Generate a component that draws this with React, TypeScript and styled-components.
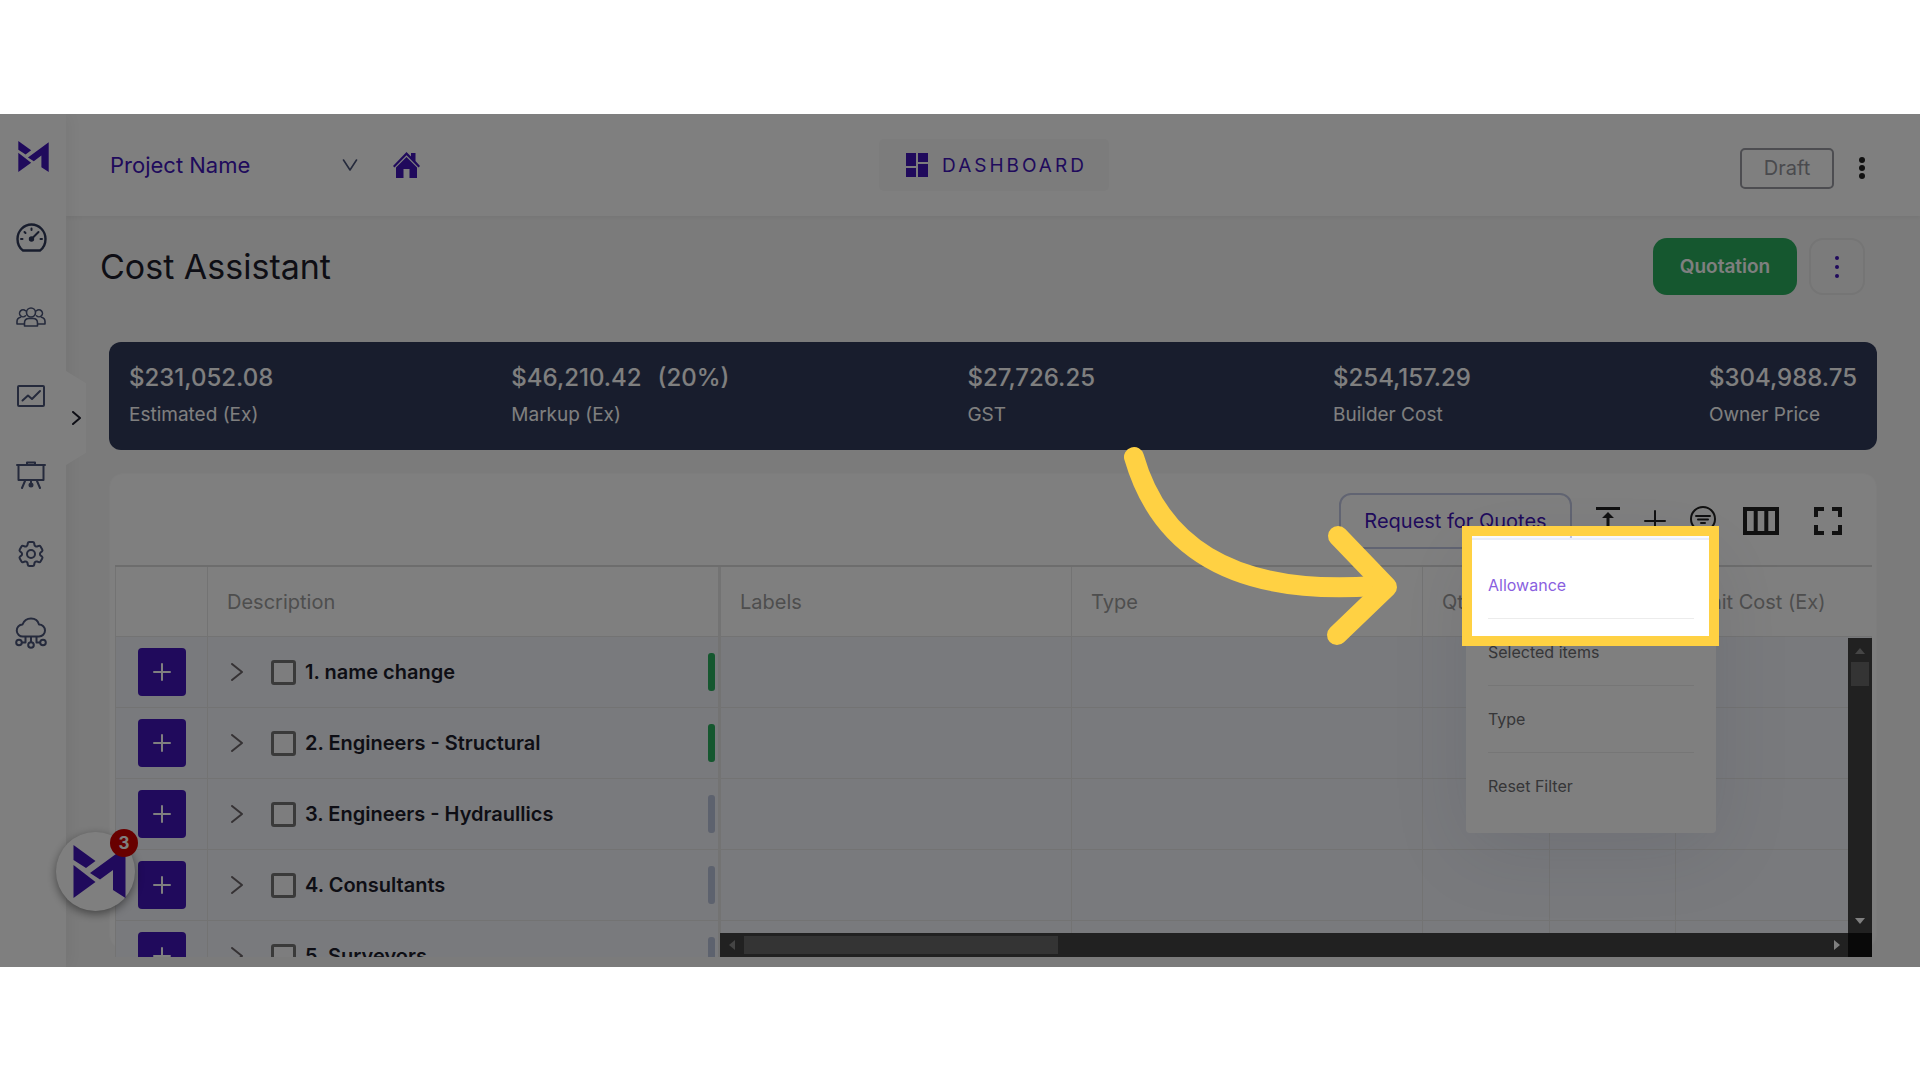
import React from "react";
import styled, { createGlobalStyle } from "styled-components";
import { HiOutlineCog6Tooth } from "react-icons/hi2";

const purple = "#4014b8";
const navy = "#303a5a";
const slate = "#4a5478";
const line = "#e6e6e6";
const yellow = "#ffd143";

const GlobalStyle = createGlobalStyle`
  *, *::before, *::after { box-sizing: border-box; }
  body {
    margin: 0;
    background: #fff;
    color: #1c1d2b;
    font-family: Inter, "Open Sans", sans-serif;
    font-size: 18px;
  }
  button, select, input { font: inherit; color: inherit; margin: 0; }
  button { border: 0; padding: 0; background: none; cursor: pointer; }
  svg { display: block; }
`;

const Page = styled.div`
  min-height: 100vh;
  padding: 114px 0 113px;
`;

const Frame = styled.div`
  position: relative;
  display: flex;
  height: calc(100vh - 227px);
  overflow: hidden;
  background: #f7f7f7;
`;

const Sidebar = styled.nav`
  position: relative;
  z-index: 2;
  flex: 0 0 66px;
  display: flex;
  flex-direction: column;
  align-items: flex-start;
  padding-top: 27px;
  background: #fff;
  box-shadow: 4px 0 16px rgba(0, 0, 0, 0.06);
`;

const Brand = styled.a`
  padding-left: 18px;
  margin-bottom: 26px;
`;

const NavLink = styled.a<{ $active?: boolean }>`
  display: flex;
  align-items: center;
  justify-content: center;
  width: 62px;
  height: 79px;
  color: ${(p) => (p.$active ? navy : slate)};
`;

const ExpandTab = styled.button`
  position: absolute;
  left: 100%;
  top: 257px;
  width: 20px;
  height: 94px;
  display: flex;
  align-items: center;
  justify-content: center;
  background: #fff;
  clip-path: polygon(0 0, 100% 13%, 100% 87%, 0 100%);
`;

const Main = styled.main`
  flex: 1;
  min-width: 0;
  display: flex;
  flex-direction: column;
`;

const Header = styled.header`
  flex: 0 0 102px;
  display: grid;
  grid-template-columns: 1fr auto 1fr;
  align-items: center;
  padding: 0 55px 0 44px;
  background: #fff;
  box-shadow: 0 2px 4px rgba(0, 0, 0, 0.05);
`;

const HeaderLeft = styled.div`
  display: flex;
  align-items: center;
  gap: 35px;
`;

const HeaderRight = styled.div`
  display: flex;
  align-items: center;
  justify-content: flex-end;
  gap: 25px;
  padding-top: 6px;
`;

const ProjectPicker = styled.label`
  display: grid;
  grid-template-columns: 232px 16px;
  align-items: center;
  color: ${slate};
`;

const ProjectSelect = styled.select`
  grid-area: 1 / 1 / 2 / 3;
  appearance: none;
  border: 0;
  padding: 0;
  background: none;
  color: ${purple};
  font-size: 22px;
  line-height: 32px;
`;

const PickerArrow = styled.span`
  grid-area: 1 / 2;
  pointer-events: none;
`;

const HomeLink = styled.a`
  color: ${purple};
`;

const DashboardButton = styled.button`
  display: flex;
  align-items: center;
  gap: 14px;
  height: 52px;
  margin-right: -13px;
  padding: 0 22px 0 27px;
  border-radius: 5px;
  background: #f8f8f8;
  color: ${purple};
  font-size: 19px;
  letter-spacing: 3px;
`;

const DraftButton = styled.button`
  height: 41px;
  width: 94px;
  border: 2px solid #9a9ba3;
  border-radius: 5px;
  color: #94959c;
  font-size: 20px;
`;

const TitleRow = styled.div`
  display: flex;
  align-items: center;
  justify-content: space-between;
  padding: 22px 55px 0 34px;
`;

const Title = styled.h1`
  margin: 0;
  font-size: 34px;
  font-weight: 400;
  line-height: 40px;
`;

const Actions = styled.div`
  display: flex;
  gap: 12px;
`;

const QuotationButton = styled.button`
  width: 144px;
  height: 57px;
  border-radius: 14px;
  background: #2aae5e;
  color: #fff;
  font-size: 19px;
  font-weight: 600;
`;

const MoreButton = styled.button`
  display: flex;
  align-items: center;
  justify-content: center;
  width: 56px;
  height: 57px;
  border: 2px solid #eaeaea;
  border-radius: 14px;
  color: ${purple};
`;

const Stats = styled.dl`
  display: flex;
  justify-content: space-between;
  margin: 47px 43px 0;
  padding: 19px 20px 0;
  height: 108px;
  flex: none;
  border-radius: 12px;
  background: ${navy};
  color: #fff;
`;

const Stat = styled.div`
  display: flex;
  flex-direction: column-reverse;
  justify-content: flex-end;
  gap: 3px;
`;

const StatLabel = styled.dt`
  font-size: 19px;
  line-height: 34px;
`;

const StatValue = styled.dd`
  display: flex;
  gap: 16px;
  margin: 0;
  font-size: 24px;
  font-weight: 500;
  line-height: 34px;
`;

const Card = styled.section`
  flex: 1;
  min-height: 0;
  display: flex;
  flex-direction: column;
  margin: 23px 43px 18px;
  padding: 0 4px 0 5px;
  border: 1px solid #fafafa;
  border-radius: 14px;
  background: #fff;
`;

const Toolbar = styled.div`
  flex: 0 0 91px;
  display: flex;
  align-items: center;
  justify-content: flex-end;
  gap: 27px;
  padding: 3px 30px 0 0;
`;

const ToolGroup = styled.div<{ $gap: number }>`
  display: flex;
  align-items: center;
  gap: ${(p) => p.$gap}px;
`;

const RequestButton = styled.button`
  width: 233px;
  height: 56px;
  border: 2px solid #c3c9e4;
  border-radius: 12px;
  color: ${purple};
  font-size: 20px;
`;

const ToolButton = styled.button`
  color: #222;
`;

const ExpandButton = styled.button`
  color: #6b6468;
`;

const FilterAnchor = styled.div`
  position: relative;
`;

const Menu = styled.ul`
  position: absolute;
  z-index: 5;
  top: 32px;
  right: 0;
  width: 250px;
  margin: 0;
  padding: 12px 22px 13px;
  list-style: none;
  border-top: 2px solid #e9edf8;
  border-radius: 0 0 4px 4px;
  background: #fff;
  box-shadow: 0 16px 80px rgba(40, 50, 100, 0.1);
`;

const MenuItem = styled.li`
  height: 67px;
  border-bottom: 1px solid #ececec;
  &:last-child { border-bottom: 0; }
`;

const MenuButton = styled.button<{ $active?: boolean }>`
  width: 100%;
  height: 66px;
  text-align: left;
  font-size: 16px;
  color: ${(p) => (p.$active ? "#8a5fe0" : "#6c6c70")};
`;

const Spotlight = styled.div`
  position: absolute;
  z-index: 50;
  top: 20px;
  left: -228px;
  width: 257px;
  height: 120px;
  border: 10px solid ${yellow};
  box-shadow: 0 0 0 4000px rgba(0, 0, 0, 0.5);
  pointer-events: none;
`;

const Pointer = styled.svg`
  position: absolute;
  z-index: 51;
  top: -66px;
  left: -570px;
  pointer-events: none;
`;

const Grid = styled.div`
  position: relative;
  flex: 1;
  min-height: 0;
  margin-bottom: -9px;
  overflow: hidden;
  border-top: 2px solid #dadada;
`;

const Table = styled.table`
  width: 100%;
  table-layout: fixed;
  border-collapse: separate;
  border-spacing: 0;
`;

const HeadCell = styled.th<{ $pinned?: boolean }>`
  height: 70px;
  padding: 0 0 0 19px;
  text-align: left;
  font-size: 20px;
  font-weight: 400;
  white-space: nowrap;
  color: #9c9c9c;
  border-bottom: 1px solid ${line};
  border-right: ${(p) => (p.$pinned ? 3 : 1)}px solid ${line};
  &:first-child { border-left: 1px solid ${line}; }
  &:last-child { border-right: 0; }
`;

const Cell = styled.td<{ $pinned?: boolean }>`
  height: 71px;
  padding: 0;
  background: #f2f4fa;
  border-bottom: 1px solid ${line};
  border-right: ${(p) => (p.$pinned ? 3 : 1)}px solid ${line};
  &:first-child { border-left: 1px solid ${line}; }
`;

const AddButton = styled.button`
  display: flex;
  align-items: center;
  justify-content: center;
  width: 48px;
  height: 48px;
  margin: 0 auto;
  border-radius: 4px;
  background: ${purple};
  color: #fff;
`;

const RowInner = styled.div`
  display: flex;
  align-items: center;
  height: 70px;
  padding: 0 3px 0 23px;
`;

const RowLabel = styled.label`
  flex: 1;
  display: flex;
  align-items: center;
  gap: 9px;
  margin-left: 28px;
  font-weight: 600;
  font-size: 20px;
  line-height: 24px;
`;

const Check = styled.input`
  appearance: none;
  width: 25px;
  height: 25px;
  border: 3px solid #757575;
  border-radius: 3px;
  background: #fafbfd;
`;

const Status = styled.span<{ $done: boolean }>`
  width: 7px;
  height: 38px;
  border-radius: 3px;
  background: ${(p) => (p.$done ? "#2aae5e" : "#bac4dc")};
`;

const TrackX = styled.div`
  position: absolute;
  left: 605px;
  right: 24px;
  bottom: 0;
  height: 24px;
  display: flex;
  align-items: center;
  justify-content: space-between;
  padding: 0 8px 0 9px;
  background: #424242;
`;

const ThumbX = styled.span`
  flex: 0 1 314px;
  height: 18px;
  margin: 0 auto 0 9px;
  background: #686868;
`;

const TrackY = styled.div`
  position: absolute;
  top: 71px;
  right: 0;
  bottom: 24px;
  width: 24px;
  display: flex;
  flex-direction: column;
  align-items: center;
  justify-content: space-between;
  padding: 10px 0 9px;
  background: #424242;
`;

const ThumbY = styled.span`
  width: 18px;
  height: 24px;
  margin: 8px 0 auto;
  background: #686868;
`;

const Corner = styled.div`
  position: absolute;
  right: 0;
  bottom: 0;
  width: 24px;
  height: 24px;
  background: #121212;
`;

const ChatButton = styled.button`
  position: absolute;
  z-index: 3;
  left: 56px;
  bottom: 56px;
  width: 79px;
  height: 79px;
  display: flex;
  align-items: center;
  justify-content: center;
  padding-left: 8px;
  border-radius: 50%;
  background: #fff;
  box-shadow: 0 3px 10px rgba(0, 0, 0, 0.45);
`;

const ChatBadge = styled.span`
  position: absolute;
  top: -3px;
  right: -3px;
  width: 28px;
  height: 28px;
  border-radius: 50%;
  background: #d00000;
  color: #fff;
  font-size: 17px;
  font-weight: 700;
  line-height: 28px;
  text-align: center;
`;

const Logo = ({ size }: { size: number }) => (
  <svg width={size} height={size} viewBox="0 0 52 53" fill={purple} aria-hidden="true">
    <path d="M0 0 22 16 12.500 23 0 15Z" />
    <path d="M0 20 22 37 0 53Z" />
    <path d="M16.500 28 52 2V53L39.500 45V25L26.500 34.500Z" />
  </svg>
);

const stroke = {
  fill: "none",
  stroke: "currentColor",
  strokeLinecap: "round" as const,
  strokeLinejoin: "round" as const,
};

const HomeIcon = () => (
  <svg width="27" height="26" viewBox="0 0 27 26" fill="currentColor">
    <path d="M13.500 0 18 4.500V1h4.500v8L27 14l-1.500 1.500L13.500 3.200 1.500 15.500 0 14Z" />
    <path d="M13.500 5 24 15.500V26h-7.500v-9h-6v9H3V15.500Z" />
  </svg>
);

const GaugeIcon = () => (
  <svg width="31" height="29" viewBox="0 0 31 29" {...stroke} strokeWidth="2.400">
    <path d="M7 27.500C3.500 25 1.500 20.500 1.500 16a14 14.500 0 0 1 28 0c0 4.500-2 9-5.500 11.500Z" />
    <path strokeWidth="2" d="M5 16h1.500M24.500 16H26M15.500 5.500V7M8.500 9l1 1M22.500 9l-6 6" />
    <circle cx="15.500" cy="16" r="1.500" fill="currentColor" />
  </svg>
);

const PeopleIcon = () => (
  <svg width="30" height="20" viewBox="0 0 30 20" {...stroke} strokeWidth="1.600">
    <circle cx="15" cy="5.500" r="4.500" />
    <path d="M8.500 19v-3c0-3 2-4.500 4.500-4.500h4c2.500 0 4.500 1.500 4.500 4.500v3Z" />
    <path d="M9.500 8.800A3.500 3.500 0 1 1 9.500 3.800M20.500 8.800a3.500 3.500 0 1 0 0-5" />
    <path d="M8 17H1v-2.500c0-2 1.500-3.800 3.500-4.300M22 17h7v-2.500c0-2-1.500-3.800-3.500-4.300" />
  </svg>
);

const ChartIcon = () => (
  <svg width="28" height="22" viewBox="0 0 28 22" {...stroke} strokeWidth="2">
    <rect x="1" y="1" width="26" height="20" rx="1" />
    <path d="m5.500 15.500 5.500-5 4 3.500 8-8" />
  </svg>
);

const BoardIcon = () => (
  <svg width="30" height="28" viewBox="0 0 30 28" {...stroke} strokeWidth="2">
    <path d="M1 4h28M2.500 4v15h25V4M11 4V1.500h8V4M9 20l-3 7M21 20l3 7M15 20v4" />
    <circle cx="15" cy="24" r="1.500" fill="currentColor" />
  </svg>
);

const CloudIcon = () => (
  <svg width="32" height="32" viewBox="0 0 32 32" {...stroke} strokeWidth="2">
    <path d="M8 19.500a6 6 0 0 1-.5-12C9 3.500 12 1.500 16 1.500s7 2 8 6a6 6 0 0 1 0 12Z" />
    <path d="M16 20v5M10.500 20v5.500H7M21.500 20v5.500H25" />
    <circle cx="4" cy="25.500" r="2.800" />
    <circle cx="28" cy="25.500" r="2.800" />
    <circle cx="16" cy="28" r="2.800" />
  </svg>
);

const Dots = ({ r, gap }: { r: number; gap: number }) => (
  <svg width={r * 2} height={r * 2 + gap * 2} fill="currentColor">
    {[0, 1, 2].map((i) => (
      <circle key={i} cx={r} cy={r + gap * i} r={r} />
    ))}
  </svg>
);

const Chevron = ({ width, height, weight }: { width: number; height: number; weight: number }) => (
  <svg width={width} height={height} viewBox={`0 0 ${width} ${height}`} {...stroke} strokeWidth={weight}>
    <path d={`M1 1 ${width - 1} ${height / 2} 1 ${height - 1}`} />
  </svg>
);

const Triangle = ({ d, w, h, fill }: { d: string; w: number; h: number; fill: string }) => (
  <svg width={w} height={h} fill={fill}>
    <path d={d} />
  </svg>
);

const navItems = [
  { name: "Overview", icon: <GaugeIcon />, active: true },
  { name: "Team", icon: <PeopleIcon /> },
  { name: "Reports", icon: <ChartIcon /> },
  { name: "Presentation", icon: <BoardIcon /> },
  { name: "Settings", icon: <HiOutlineCog6Tooth size={32} /> },
  { name: "Integrations", icon: <CloudIcon /> },
];

const stats = [
  { label: "Estimated (Ex)", value: "$231,052.08" },
  { label: "Markup (Ex)", value: "$46,210.42", extra: "(20%)" },
  { label: "GST", value: "$27,726.25" },
  { label: "Builder Cost", value: "$254,157.29" },
  { label: "Owner Price", value: "$304,988.75" },
];

const rows = [
  { name: "1. name change", done: true },
  { name: "2. Engineers - Structural", done: true },
  { name: "3. Engineers - Hydraullics", done: false },
  { name: "4. Consultants", done: false },
  { name: "5. Surveyors", done: false },
];

const filters = ["Allowance", "Selected items", "Type", "Reset Filter"];

export default function App() {
  return (
    <Page>
      <GlobalStyle />
      <Frame>
        <Sidebar>
          <Brand href="#" aria-label="Home">
            <Logo size={31} />
          </Brand>
          {navItems.map((item) => (
            <NavLink key={item.name} href="#" aria-label={item.name} $active={item.active}>
              {item.icon}
            </NavLink>
          ))}
          <ExpandTab aria-label="Expand menu">
            <Chevron width={9} height={14} weight={2} />
          </ExpandTab>
        </Sidebar>

        <Main>
          <Header>
            <HeaderLeft>
              <ProjectPicker>
                <ProjectSelect aria-label="Project">
                  <option>Project Name</option>
                </ProjectSelect>
                <PickerArrow>
                  <svg width="16" height="12" viewBox="0 0 16 12" {...stroke} strokeWidth="1.600">
                    <path d="m1.500 1 6.500 10 6.500-10" />
                  </svg>
                </PickerArrow>
              </ProjectPicker>
              <HomeLink href="#" aria-label="Project home">
                <HomeIcon />
              </HomeLink>
            </HeaderLeft>
            <DashboardButton>
              <svg width="22" height="24" viewBox="0 0 22 24" fill="currentColor">
                <path d="M0 0h10v13H0zM12 0h10v9H12zM0 15h10v9H0zM12 11h10v13H12z" />
              </svg>
              DASHBOARD
            </DashboardButton>
            <HeaderRight>
              <DraftButton>Draft</DraftButton>
              <ToolButton aria-label="More options">
                <Dots r={3} gap={8} />
              </ToolButton>
            </HeaderRight>
          </Header>

          <TitleRow>
            <Title>Cost Assistant</Title>
            <Actions>
              <QuotationButton>Quotation</QuotationButton>
              <MoreButton aria-label="Quotation options">
                <Dots r={2} gap={9} />
              </MoreButton>
            </Actions>
          </TitleRow>

          <Stats>
            {stats.map((s) => (
              <Stat key={s.label}>
                <StatLabel>{s.label}</StatLabel>
                <StatValue>
                  <span>{s.value}</span>
                  {s.extra && <span>{s.extra}</span>}
                </StatValue>
              </Stat>
            ))}
          </Stats>

          <Card>
            <Toolbar>
              <ToolGroup $gap={24}>
                <RequestButton>Request for Quotes</RequestButton>
                <ToolButton aria-label="Collapse rows">
                  <svg width="24" height="28" viewBox="0 0 24 28" fill="currentColor">
                    <path d="M0 0h24v3H0zM12 5l6 6h-4.500v9H18l-6 7-6-7h4.500v-9H6z" />
                  </svg>
                </ToolButton>
                <ToolButton aria-label="Add row">
                  <svg width="22" height="22" viewBox="0 0 22 22" {...stroke} strokeWidth="2">
                    <path d="M11 1v20M1 11h20" />
                  </svg>
                </ToolButton>
                <FilterAnchor>
                  <ToolButton aria-label="Filter">
                    <svg width="26" height="26" viewBox="0 0 26 26" {...stroke} strokeWidth="2">
                      <circle cx="13" cy="13" r="12" />
                      <path d="M6 10h14M8 13.500h10M11 17h4" />
                    </svg>
                  </ToolButton>
                  <Menu>
                    {filters.map((f, i) => (
                      <MenuItem key={f}>
                        <MenuButton $active={i === 0}>{f}</MenuButton>
                      </MenuItem>
                    ))}
                  </Menu>
                  <Spotlight />
                  <Pointer
                    width="290"
                    height="210"
                    viewBox="1120 440 290 210"
                    fill="none"
                    stroke={yellow}
                    strokeWidth="20"
                    strokeLinecap="round"
                    strokeLinejoin="round"
                  >
                    <path d="M1134 457C1158 540 1225 597 1375 586" />
                    <path d="M1338 536 1387 587 1337 635" />
                  </Pointer>
                </FilterAnchor>
              </ToolGroup>
              <ToolGroup $gap={35}>
                <ToolButton aria-label="Columns">
                  <svg width="36" height="28" viewBox="0 0 36 28" {...stroke} strokeLinejoin="miter" strokeWidth="4">
                    <path d="M2 2h32v24H2zM12.700 2v24M23.300 2v24" />
                  </svg>
                </ToolButton>
                <ToolButton aria-label="Full screen">
                  <svg width="28" height="28" viewBox="0 0 28 28" {...stroke} strokeLinecap="butt" strokeLinejoin="miter" strokeWidth="4">
                    <path d="M2 10V2h8M18 2h8v8M26 18v8h-8M10 26H2v-8" />
                  </svg>
                </ToolButton>
              </ToolGroup>
            </Toolbar>

            <Grid>
              <Table>
                <colgroup>
                  <col width="93" />
                  <col width="513" />
                  <col width="351" />
                  <col width="351" />
                  <col width="127" />
                  <col width="126" />
                  <col />
                </colgroup>
                <thead>
                  <tr>
                    <HeadCell />
                    <HeadCell $pinned>Description</HeadCell>
                    <HeadCell>Labels</HeadCell>
                    <HeadCell>Type</HeadCell>
                    <HeadCell>Qty</HeadCell>
                    <HeadCell />
                    <HeadCell>Unit Cost (Ex)</HeadCell>
                  </tr>
                </thead>
                <tbody>
                  {rows.map((row) => (
                    <tr key={row.name}>
                      <Cell>
                        <AddButton aria-label={`Add to ${row.name}`}>
                          <svg width="18" height="18" viewBox="0 0 18 18" {...stroke} strokeWidth="2">
                            <path d="M9 1v16M1 9h16" />
                          </svg>
                        </AddButton>
                      </Cell>
                      <Cell $pinned>
                        <RowInner>
                          <ExpandButton aria-label={`Expand ${row.name}`}>
                            <Chevron width={12} height={18} weight={2} />
                          </ExpandButton>
                          <RowLabel>
                            <Check type="checkbox" />
                            {row.name}
                          </RowLabel>
                          <Status $done={row.done} />
                        </RowInner>
                      </Cell>
                      <Cell />
                      <Cell />
                      <Cell />
                      <Cell />
                      <Cell />
                    </tr>
                  ))}
                </tbody>
              </Table>
              <TrackX>
                <Triangle w={6} h={10} d="M6 0v10L0 5z" fill="#8a8a8a" />
                <ThumbX />
                <Triangle w={6} h={10} d="M0 0v10l6-5z" fill="#fff" />
              </TrackX>
              <TrackY>
                <Triangle w={10} h={6} d="M0 6h10L5 0z" fill="#8a8a8a" />
                <ThumbY />
                <Triangle w={10} h={6} d="M0 0h10L5 6z" fill="#fff" />
              </TrackY>
              <Corner />
            </Grid>
          </Card>
        </Main>

        <ChatButton aria-label="Open chat, 3 unread">
          <Logo size={53} />
          <ChatBadge>3</ChatBadge>
        </ChatButton>
      </Frame>
    </Page>
  );
}
